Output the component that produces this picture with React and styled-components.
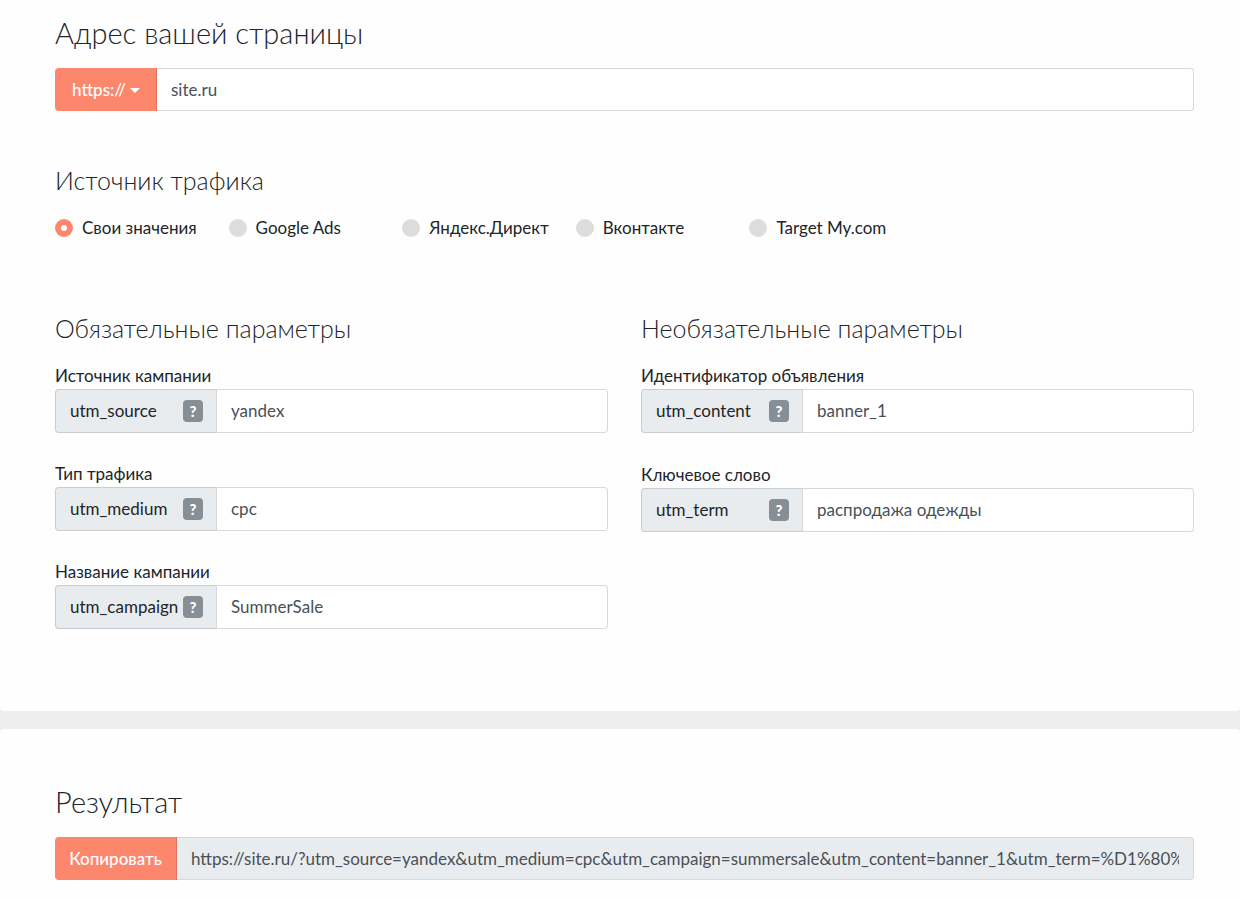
import React, { useState } from "react";
import styled, { createGlobalStyle } from "styled-components";

const sources = [
  "Свои значения",
  "Google Ads",
  "Яндекс.Директ",
  "Вконтакте",
  "Target My.com",
];

const requiredParams = [
  { name: "utm_source", label: "Источник кампании" },
  { name: "utm_medium", label: "Тип трафика" },
  { name: "utm_campaign", label: "Название кампании" },
];

const optionalParams = [
  { name: "utm_content", label: "Идентификатор объявления" },
  { name: "utm_term", label: "Ключевое слово" },
];

const buildUrl = (protocol, site, values) => {
  const query = Object.keys(values)
    .filter((name) => values[name])
    .map((name) => `${name}=${encodeURIComponent(values[name].toLowerCase())}`)
    .join("&");
  return `${protocol}${site}/?${query}`;
};

const ParamField = ({ name, label, value, onChange }) => (
  <Field>
    <FieldLabel htmlFor={name}>{label}</FieldLabel>
    <ParamGroup>
      <Addon>
        {name}
        <Hint type="button">?</Hint>
      </Addon>
      <TextInput
        id={name}
        value={value}
        onChange={(e) => onChange(name, e.target.value)}
      />
    </ParamGroup>
  </Field>
);

const App = () => {
  const [protocol, setProtocol] = useState("https://");
  const [site, setSite] = useState("site.ru");
  const [source, setSource] = useState(sources[0]);
  const [values, setValues] = useState({
    utm_source: "yandex",
    utm_medium: "cpc",
    utm_campaign: "SummerSale",
    utm_content: "banner_1",
    utm_term: "распродажа одежды",
  });

  const url = buildUrl(protocol, site, values);

  const changeValue = (name, value) => {
    setValues({ ...values, [name]: value });
  };

  return (
    <>
      <GlobalStyle />
      <Page>
        <FormPanel>
          <Title as="label" htmlFor="site">
            Адрес вашей страницы
          </Title>
          <InputGroup>
            <Protocol>
              <ProtocolSelect
                aria-label="Протокол"
                value={protocol}
                onChange={(e) => setProtocol(e.target.value)}
              >
                <option>https://</option>
                <option>http://</option>
              </ProtocolSelect>
              <Caret viewBox="0 0 10 5">
                <path d="M0 0h10L5 5z" fill="currentColor" />
              </Caret>
            </Protocol>
            <TextInput
              id="site"
              value={site}
              onChange={(e) => setSite(e.target.value)}
            />
          </InputGroup>

          <Sources>
            <Subtitle as="legend">Источник трафика</Subtitle>
            <RadioList>
              {sources.map((item) => (
                <RadioLabel key={item}>
                  <Radio
                    type="radio"
                    name="source"
                    checked={source === item}
                    onChange={() => setSource(item)}
                  />
                  {item}
                </RadioLabel>
              ))}
            </RadioList>
          </Sources>

          <Columns>
            <section>
              <Subtitle>Обязательные параметры</Subtitle>
              <Fields $gap={29}>
                {requiredParams.map((param) => (
                  <ParamField
                    key={param.name}
                    {...param}
                    value={values[param.name]}
                    onChange={changeValue}
                  />
                ))}
              </Fields>
            </section>
            <section>
              <Subtitle>Необязательные параметры</Subtitle>
              <Fields $gap={30}>
                {optionalParams.map((param) => (
                  <ParamField
                    key={param.name}
                    {...param}
                    value={values[param.name]}
                    onChange={changeValue}
                  />
                ))}
              </Fields>
            </section>
          </Columns>
        </FormPanel>

        <ResultPanel>
          <Title as="label" htmlFor="result">
            Результат
          </Title>
          <InputGroup>
            <CopyButton
              type="button"
              onClick={() => navigator.clipboard.writeText(url)}
            >
              Копировать
            </CopyButton>
            <TextInput id="result" value={url} readOnly />
          </InputGroup>
        </ResultPanel>
      </Page>
    </>
  );
};

const GlobalStyle = createGlobalStyle`
  * {
    box-sizing: border-box;
  }
  body {
    margin: 0;
    background: #ededed;
    color: #212529;
    font-family: Lato, "Open Sans", sans-serif;
    font-size: 17px;
    line-height: 24px;
  }
  button,
  input,
  select {
    font: inherit;
  }
`;

const Page = styled.main`
  display: flex;
  flex-direction: column;
  gap: 18px;
  min-height: 100vh;
`;

const Panel = styled.div`
  background: #fefefe;
  padding: 0 46px 0 55px;
`;

const FormPanel = styled(Panel)`
  padding-top: 14px;
  padding-bottom: 82px;
  border-radius: 0 0 4px 4px;
`;

const ResultPanel = styled(Panel)`
  flex: 1;
  padding-top: 54px;
  border-radius: 4px 4px 0 0;
`;

const Title = styled.h2`
  display: block;
  margin: 0 0 16px;
  font-size: 29px;
  font-weight: 300;
  line-height: 38px;
`;

const Subtitle = styled.h3`
  margin: 0 0 20px;
  padding: 0;
  font-size: 25px;
  font-weight: 300;
  line-height: 32px;
`;

const InputGroup = styled.div`
  display: flex;
  height: 43px;
`;

const ParamGroup = styled(InputGroup)`
  height: 44px;
`;

const TextInput = styled.input`
  flex: 1;
  min-width: 0;
  padding: 0 14px;
  border: 1px solid #d6d8db;
  border-left: 0;
  border-radius: 0 4px 4px 0;
  background: #fff;
  color: #495057;
  outline: none;

  &:read-only {
    background: #e9ecef;
  }
`;

const Protocol = styled.div`
  position: relative;
  width: 102px;
`;

const ProtocolSelect = styled.select`
  width: 100%;
  height: 100%;
  padding: 0 17px;
  appearance: none;
  border: 0;
  border-right: 1px solid #dd755c;
  border-radius: 4px 0 0 4px;
  background: #fc876d;
  color: #fff;
  font-weight: 500;
`;

const Caret = styled.svg`
  position: absolute;
  top: 20px;
  right: 17px;
  width: 10px;
  height: 5px;
  color: #fff;
  pointer-events: none;
`;

const Sources = styled.fieldset`
  margin: 53px 0 0;
  padding: 0;
  border: 0;
`;

const RadioList = styled.div`
  display: grid;
  grid-template-columns: repeat(5, 1fr);
  max-width: 868px;
`;

const RadioLabel = styled.label`
  display: flex;
  align-items: center;
  gap: 9px;
  white-space: nowrap;
`;

const Radio = styled.input`
  flex: none;
  width: 18px;
  height: 18px;
  margin: 0;
  appearance: none;
  border-radius: 50%;
  background: #ddd;

  &:checked {
    border: 6px solid #fc876d;
    background: #fff;
  }
`;

const Columns = styled.div`
  display: grid;
  grid-template-columns: 1fr 1fr;
  gap: 33px;
  margin-top: 72px;
`;

const Fields = styled.div`
  display: flex;
  flex-direction: column;
  gap: ${({ $gap }) => $gap}px;
`;

const Field = styled.div`
  display: flex;
  flex-direction: column;
  gap: 1px;
`;

const FieldLabel = styled.label`
  width: fit-content;
`;

const Addon = styled.div`
  display: flex;
  align-items: center;
  justify-content: space-between;
  width: 162px;
  padding: 0 13px 0 14px;
  border: 1px solid #c9cdd1;
  border-right-color: #d6d8db;
  border-radius: 4px 0 0 4px;
  background: #e9ecef;
`;

const Hint = styled.button`
  flex: none;
  width: 20px;
  height: 22px;
  padding: 0;
  border: 0;
  border-radius: 4px;
  background: #868e96;
  color: #fff;
  font-size: 15px;
  font-weight: 900;
  line-height: 22px;
`;

const CopyButton = styled.button`
  width: 122px;
  padding: 0;
  border: 0;
  border-right: 1px solid #dd755c;
  border-radius: 4px 0 0 4px;
  background: #fc876d;
  color: #fff;
  font-weight: 500;
`;

export default App;
